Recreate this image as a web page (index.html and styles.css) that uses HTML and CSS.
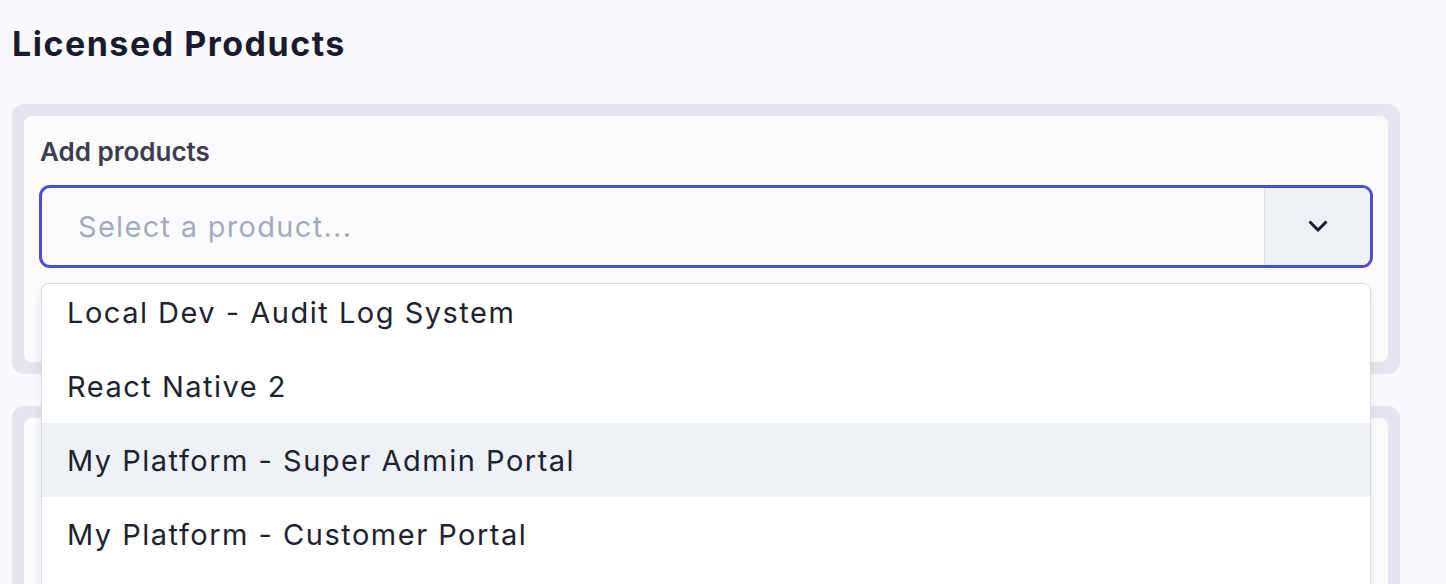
FILE: index.html
```html
<!DOCTYPE html>
<html lang="en">
<head>
<meta charset="utf-8">
<title>Licensed Products</title>
<link rel="stylesheet" href="styles.css">
</head>
<body>
<main class="page">
  <h1 class="title">Licensed Products</h1>

  <section class="frame">
    <div class="card">
      <label class="label" for="product">Add products</label>
      <div class="combo">
        <div class="field">
          <input id="product" class="input" type="text" placeholder="Select a product...">
          <button class="toggle" type="button" aria-label="Open">
            <svg width="20" height="12" viewBox="0 0 20 12" aria-hidden="true">
              <path d="M1.5 1.5 L10 10 L18.5 1.5" fill="none" stroke="#1c1f2b" stroke-width="3" stroke-linecap="butt" stroke-linejoin="miter"/>
            </svg>
          </button>
        </div>
        <div class="menu">
          <ul class="options">
            <li class="option">Local Dev - Audit Log System</li>
            <li class="option">React Native 2</li>
            <li class="option active">My Platform - Super Admin Portal</li>
            <li class="option">My Platform - Customer Portal</li>
          </ul>
        </div>
      </div>
      <div class="spacer"></div>
    </div>
  </section>

  <section class="frame">
    <div class="card tall"></div>
  </section>
</main>
</body>
</html>
```

FILE: styles.css
```css
* { box-sizing: border-box; }

html, body {
  margin: 0;
  padding: 0;
  background: #fafafe;
  font-family: Inter, "Noto Sans", "Liberation Sans", sans-serif;
  overflow: hidden;
}

.page {
  width: 1412px;
  padding: 24px 12px 0 12px;
}

.title {
  margin: 0 0 40px 0;
  font-size: 34px;
  line-height: 40px;
  font-weight: 650;
  color: #1b1b2f;
  letter-spacing: 1.5px;
}

.frame {
  background: #e6e6ee;
  border-radius: 12px;
  padding: 12px;
  margin-bottom: 32px;
}

.card {
  background: #fbfbfe;
  border-radius: 8px;
  padding: 20px 16px 0 16px;
}

.card.tall {
  height: 240px;
}

.label {
  display: block;
  font-size: 26px;
  line-height: 32px;
  font-weight: 600;
  color: #3d3d4e;
  margin-bottom: 18px;
}

.combo {
  position: relative;
}

.field {
  display: flex;
  height: 81px;
  border: 2px solid #4a4ddb;
  box-shadow: 0 0 0 1px #4a4ddb;
  border-radius: 10px;
  overflow: hidden;
  background: #fbfbfe;
}

.input {
  flex: 1;
  min-width: 0;
  border: 0;
  outline: 0;
  background: transparent;
  padding: 0 0 0 36px;
  font-family: inherit;
  font-size: 29px;
  letter-spacing: 1.3px;
  color: #1e2330;
}

.input::placeholder {
  color: #a3acbf;
}

.toggle {
  width: 106px;
  flex: none;
  border: 0;
  border-left: 1px solid #dfe2e8;
  background: #eef1f6;
  display: flex;
  align-items: center;
  justify-content: center;
  padding: 0;
  cursor: pointer;
}

.toggle svg {
  display: block;
  margin-top: -2px;
}

.menu {
  position: absolute;
  top: calc(100% + 16px);
  left: 1px;
  right: 1px;
  height: 340px;
  background: #ffffff;
  border: 1px solid #d9dce3;
  border-radius: 8px;
  box-shadow: 0 4px 10px rgba(20, 24, 40, 0.08);
  overflow: hidden;
  z-index: 10;
}

.options {
  list-style: none;
  margin: -9px 0 0 0;
  padding: 0;
}

.option {
  height: 74px;
  display: flex;
  align-items: center;
  padding-left: 25px;
  font-size: 29px;
  letter-spacing: 1.5px;
  color: #1e2330;
}

.option.active {
  background: #eef1f6;
}

.spacer {
  height: 95px;
}
```
